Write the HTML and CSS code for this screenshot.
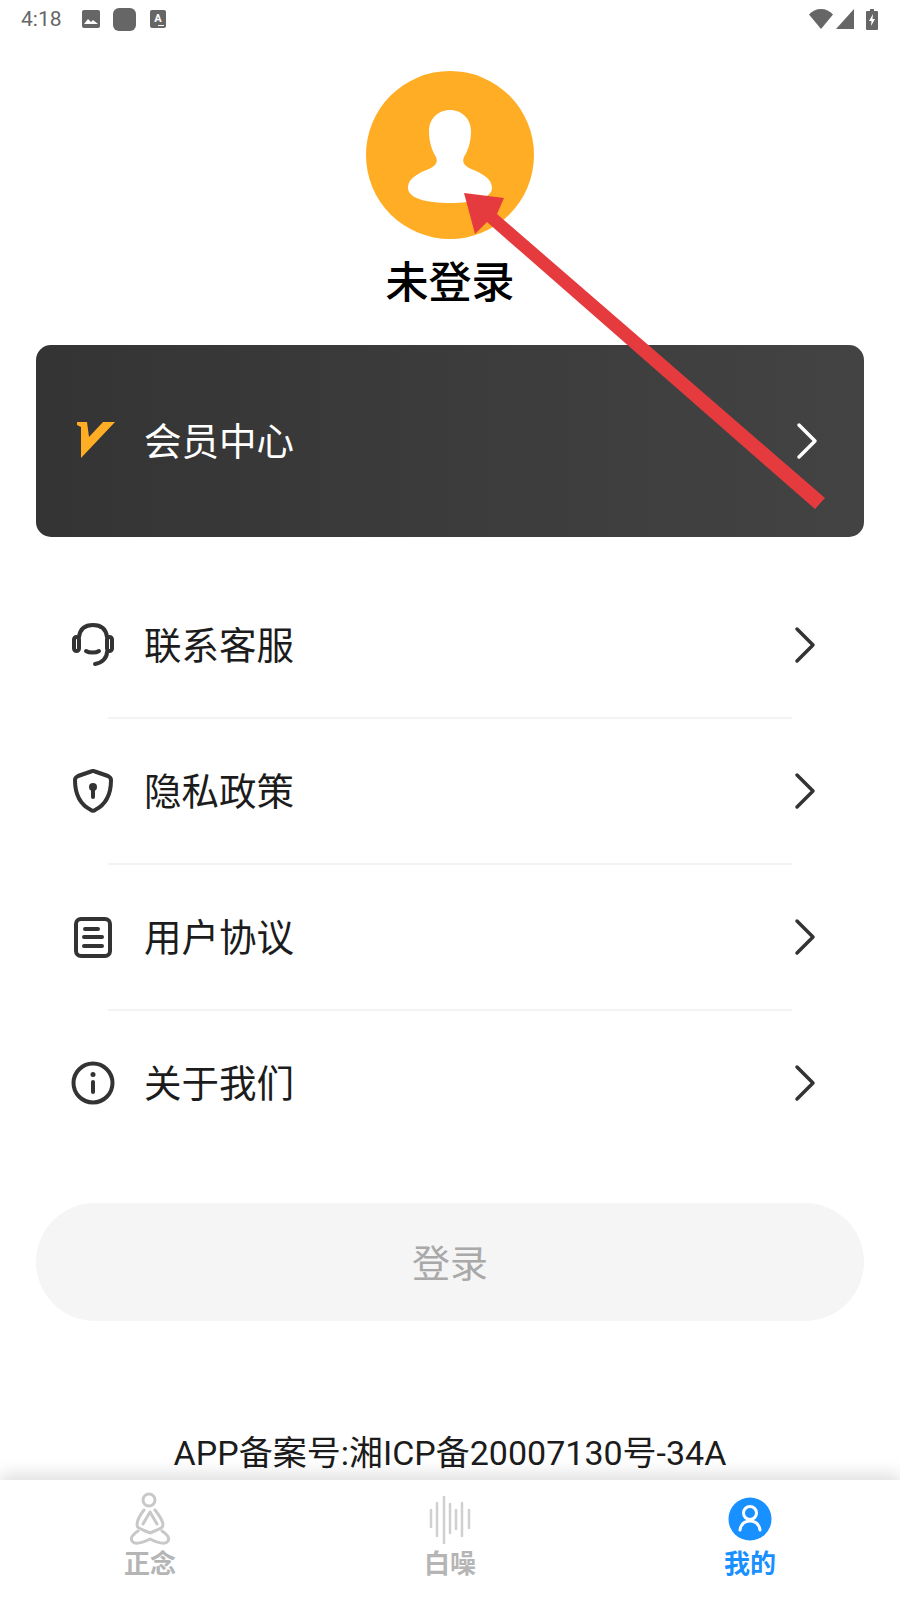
FILE: index.html
```html
<!DOCTYPE html>
<html lang="zh-CN">
<head>
    <meta charset="UTF-8">
    <meta name="viewport" content="width=device-width, initial-scale=1.0">
    <title>我的</title>
    <link rel="stylesheet" href="styles.css">
</head>
<body>
    <div class="status-bar">
        <span class="status-time">4:18</span>
        <svg class="status-icon" width="18" height="18" viewBox="0 0 18 18"><rect width="18" height="18" rx="2" fill="#666"/><path d="M2 14l4-5 3 3 2-2 5 4z" fill="#fff"/></svg>
        <span class="status-square"></span>
        <svg class="status-icon" width="16" height="18" viewBox="0 0 16 18"><rect width="16" height="18" rx="2" fill="#666"/><text x="8" y="12" class="status-letter">A</text><rect x="8" y="15" width="6" height="1" fill="#fff"/></svg>
        <span class="status-spacer"></span>
        <svg width="24" height="20" viewBox="0 0 24 20"><path d="M0 5.500C3 2 7.500 0 12 0s9 2 12 5.500L12 20z" fill="#666"/></svg>
        <svg class="status-signal" width="18" height="20" viewBox="0 0 18 20"><path d="M18 0v20H0z" fill="#666"/></svg>
        <svg class="status-battery" width="12" height="21" viewBox="0 0 12 21"><path d="M4 0h4v2h3a1 1 0 0 1 1 1v17a1 1 0 0 1-1 1H1a1 1 0 0 1-1-1V3a1 1 0 0 1 1-1h3z" fill="#666"/><path d="M7 5L3 12h2.500L5 17l4-7H6.500z" fill="#fff"/></svg>
    </div>

    <main class="content">
        <section class="profile">
            <svg class="avatar" width="168" height="168" viewBox="0 0 168 168">
                <circle cx="84" cy="84" r="84" fill="#ffad24"/>
                <path d="M84 39C96 39 105 48 105 60C105 73 101 81 98 86C96 91 98 94 103 97C115 102 126 107 126 117C126 127 108 132 84 132C60 132 42 127 42 117C42 107 53 102 65 97C70 94 72 91 70 86C67 81 63 73 63 60C63 48 72 39 84 39Z" fill="#fff"/>
            </svg>
            <div class="profile-name">未登录</div>
        </section>

        <a class="vip-card">
            <svg class="row-icon" width="44" height="44" viewBox="0 0 44 44"><path d="M6 3H16L18 18L32 3H44L10 39V8L6 6Z" fill="#ffad24"/></svg>
            <span class="row-label">会员中心</span>
            <svg class="chevron" width="24" height="38" viewBox="0 0 24 38"><path d="M4 3L20 19L4 35" fill="none" stroke="#fff" stroke-width="3.500" stroke-linecap="round" stroke-linejoin="round"/></svg>
        </a>

        <div class="menu">
            <a class="menu-row">
                <svg class="row-icon" width="44" height="44" viewBox="0 0 44 44" fill="none" stroke="#333" stroke-width="4" stroke-linecap="round">
                    <path d="M8 14C9 6 14 2 22 2S35 6 36 14"/>
                    <rect x="3" y="14" width="5" height="14" rx="2.500"/>
                    <rect x="36" y="14" width="5" height="14" rx="2.500"/>
                    <path d="M15 28C18 30 25 30 28 28"/>
                    <path d="M36 29C36 35 31 40 24 41"/>
                </svg>
                <span class="row-label">联系客服</span>
                <svg class="chevron" width="24" height="38" viewBox="0 0 24 38"><path d="M4 3L20 19L4 35" fill="none" stroke="#333" stroke-width="3.500" stroke-linecap="round" stroke-linejoin="round"/></svg>
            </a>
            <div class="divider"></div>
            <a class="menu-row">
                <svg class="row-icon" width="44" height="44" viewBox="0 0 44 44" fill="none" stroke="#333" stroke-width="4" stroke-linejoin="round">
                    <path d="M20 2.500C21 2 23 2 24 2.500L37 7C39 8 40 9 40 11C40 27 34 36 24 41C23 42 21 42 20 41C10 36 4 27 4 11C4 9 5 8 7 7Z"/>
                    <circle cx="22" cy="18" r="4" fill="#333" stroke="none"/>
                    <path d="M22 20V28" stroke-linecap="round"/>
                </svg>
                <span class="row-label">隐私政策</span>
                <svg class="chevron" width="24" height="38" viewBox="0 0 24 38"><path d="M4 3L20 19L4 35" fill="none" stroke="#333" stroke-width="3.500" stroke-linecap="round" stroke-linejoin="round"/></svg>
            </a>
            <div class="divider"></div>
            <a class="menu-row">
                <svg class="row-icon" width="44" height="44" viewBox="0 0 44 44" fill="none" stroke="#333" stroke-width="4" stroke-linecap="round">
                    <rect x="5" y="4" width="34" height="37" rx="5"/>
                    <path d="M14 14H27M13 22H31M13 31H31"/>
                </svg>
                <span class="row-label">用户协议</span>
                <svg class="chevron" width="24" height="38" viewBox="0 0 24 38"><path d="M4 3L20 19L4 35" fill="none" stroke="#333" stroke-width="3.500" stroke-linecap="round" stroke-linejoin="round"/></svg>
            </a>
            <div class="divider"></div>
            <a class="menu-row">
                <svg class="row-icon" width="44" height="44" viewBox="0 0 44 44" fill="none" stroke="#333" stroke-width="4" stroke-linecap="round">
                    <circle cx="22" cy="22" r="19.500"/>
                    <circle cx="22" cy="13.500" r="2.500" fill="#333" stroke="none"/>
                    <path d="M22 21V31"/>
                </svg>
                <span class="row-label">关于我们</span>
                <svg class="chevron" width="24" height="38" viewBox="0 0 24 38"><path d="M4 3L20 19L4 35" fill="none" stroke="#333" stroke-width="3.500" stroke-linecap="round" stroke-linejoin="round"/></svg>
            </a>
        </div>

        <button class="login-button">登录</button>
        <div class="record-number">APP备案号:湘ICP备20007130号-34A</div>
    </main>

    <nav class="tab-bar">
        <a class="tab">
            <svg class="tab-icon" width="42" height="54" viewBox="0 0 42 54" fill="none" stroke="#c8c8c8" stroke-width="3" stroke-linecap="round" stroke-linejoin="round">
                <circle cx="20" cy="8" r="6"/>
                <path d="M15 18C11 23 8 29 8 33C8 37 15 38 21 41C27 38 34 37 34 33C34 29 30 23 26 18"/>
                <path d="M21 20L14 32M21 20L28 32"/>
                <path d="M9 39C4 42 1 46 3 49C5 52 11 52 21 47C31 52 37 52 39 49C41 46 38 42 33 39"/>
            </svg>
            <span class="tab-label">正念</span>
        </a>
        <a class="tab">
            <svg class="tab-icon" width="42" height="54" viewBox="0 0 42 54" fill="none" stroke="#d0d0d0" stroke-width="2.500" stroke-linecap="round">
                <path d="M2 18V35M8 11V44M15 5V51M21 12V41M27 18V37M33 11V44M40 18V36"/>
            </svg>
            <span class="tab-label">白噪</span>
        </a>
        <a class="tab tab-active">
            <svg class="tab-icon" width="44" height="54" viewBox="0 0 44 54">
                <circle cx="22" cy="27" r="21.500" fill="#1890ff"/>
                <circle cx="22" cy="21" r="6.500" fill="none" stroke="#fff" stroke-width="3"/>
                <path d="M12 38C13 32 17 29 22 29S31 32 32 38" fill="none" stroke="#fff" stroke-width="3" stroke-linecap="round"/>
            </svg>
            <span class="tab-label">我的</span>
        </a>
    </nav>

    <!-- red annotation arrow drawn over the page -->
    <svg class="annotation" width="900" height="1600" viewBox="0 0 900 1600">
        <path d="M464 193L504 198L497 214L825 498L815 509L487 222L475 234Z" fill="#e53b3f"/>
    </svg>
</body>
</html>
```

FILE: styles.css
```css
body {
    font-family: "Noto Sans CJK SC", "Noto Sans", sans-serif;
    position: relative;
    display: flex;
    flex-direction: column;
    width: 900px;
    height: 1600px;
    margin: 0;
    overflow: hidden;
    background-color: white;
    color: #1c1c1c;
}
a {
    color: inherit;
    text-decoration: none;
}
.status-bar {
    display: flex;
    align-items: center;
    height: 38px;
    padding: 0 22px 0 21px;
    flex-shrink: 0;
}
.status-time {
    font-family: Roboto, sans-serif;
    font-size: 21px;
    color: #666;
    width: 61px;
}
.status-icon {
    margin-right: 13px;
}
.status-square {
    width: 23px;
    height: 23px;
    margin-right: 14px;
    border-radius: 6px;
    background-color: #666;
}
.status-letter {
    font-family: Roboto, sans-serif;
    font-size: 11px;
    font-weight: bold;
    fill: #fff;
    text-anchor: middle;
}
.status-spacer {
    flex: 1;
}
.status-signal {
    margin-left: 3px;
}
.status-battery {
    margin-left: 12px;
}
.content {
    flex: 1;
    display: flex;
    flex-direction: column;
}
.profile {
    display: flex;
    flex-direction: column;
    align-items: center;
    height: 307px;
    padding-top: 33px;
    box-sizing: border-box;
}
.profile-name {
    margin-top: 10px;
    font-size: 43px;
    font-weight: 500;
    line-height: 60px;
    color: #000;
}
.vip-card {
    display: flex;
    align-items: center;
    height: 192px;
    margin: 0 36px;
    padding: 0 45px 0 35px;
    border-radius: 15px;
    background: linear-gradient(90deg, #343434, #434343);
    color: white;
}
.row-label {
    flex: 1;
    margin-left: 29px;
    padding-bottom: 4px;
    font-size: 37.500px;
    line-height: 50px;
}
.menu {
    margin: 36px 36px 0;
}
.menu-row {
    display: flex;
    align-items: center;
    height: 144px;
    padding: 0 47px 0 35px;
}
.divider {
    height: 2px;
    margin: 0 72px 0 72px;
    background-color: #f3f3f3;
}
.login-button {
    display: block;
    height: 118px;
    margin: 48px 36px 0;
    padding-bottom: 4px;
    border: none;
    border-radius: 59px;
    background-color: #f5f5f5;
    color: #a9a9a9;
    font-family: inherit;
    font-size: 38px;
}
.record-number {
    margin-top: 110px;
    font-family: Roboto, "Noto Sans CJK SC", sans-serif;
    font-size: 34px;
    line-height: 44px;
    text-align: center;
}
.tab-bar {
    display: flex;
    flex-shrink: 0;
    height: 120px;
    padding-top: 12px;
    box-sizing: border-box;
    background-color: white;
    box-shadow: 0 -6px 16px rgba(0,0,0,0.13);
}
.tab {
    flex: 1;
    display: flex;
    flex-direction: column;
    align-items: center;
    color: #b5b5b5;
}
.tab-active {
    color: #1890ff;
}
.tab-label {
    font-size: 26px;
    font-weight: bold;
    line-height: 32px;
}
.annotation {
    position: absolute;
    top: 0;
    left: 0;
    pointer-events: none;
}
```
